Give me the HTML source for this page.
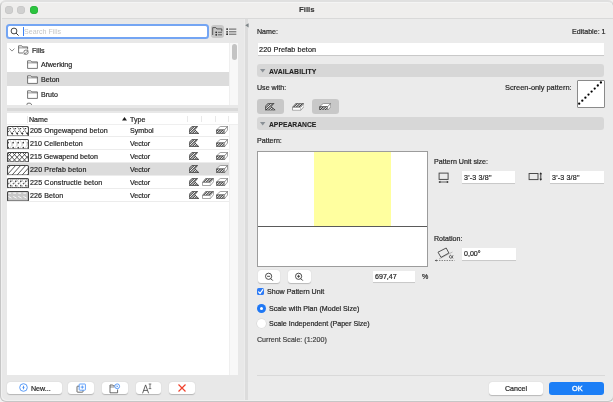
<!DOCTYPE html>
<html><head><meta charset="utf-8">
<style>
*{box-sizing:border-box;margin:0;padding:0}
html,body{width:613px;height:402px;overflow:hidden;background:#f3f3f3;font-family:"Liberation Sans",sans-serif;color:#222}
.a{position:absolute}
.t{position:absolute;white-space:nowrap;font-size:7.1px;line-height:1;color:#262626;will-change:transform;-webkit-text-stroke-width:0.2px;margin-top:0.8px}
.b{-webkit-text-stroke-width:0.1px}
.white{background:#fff}
.field{position:absolute;background:#fff;box-shadow:0 0.6px 0.6px rgba(0,0,0,0.14)}
.hdr{position:absolute;left:257px;width:347px;height:13px;background:#d7d7d7;border-radius:3px}
.btn{position:absolute;background:#fff;border-radius:3px;box-shadow:0 0.5px 1px rgba(0,0,0,0.22)}
.rowline{position:absolute;left:7px;width:222px;height:1px;background:#ececec}
</style></head><body>
<svg width="0" height="0" style="position:absolute">
 <defs>
  <pattern id="hd" width="1.8" height="1.8" patternUnits="userSpaceOnUse" patternTransform="rotate(45)"><rect width="1.8" height="1.8" fill="#fff"/><rect width="1.0" height="1.8" fill="#3a3a3a"/></pattern>
  <pattern id="hl" width="5" height="5" patternUnits="userSpaceOnUse" patternTransform="rotate(45)"><rect width="5" height="5" fill="#fff"/><rect width="1.3" height="5" fill="#333"/></pattern>
  <symbol id="ifp" viewBox="0 0 10 8"><path d="M3 0.4H8.6L5.8 3.8L9.8 7.6H0.3V3.3Z" fill="url(#hd)" stroke="#333" stroke-width="0.75" stroke-linejoin="round"/></symbol>
  <symbol id="isl" viewBox="0 0 12 8"><path d="M3.6 0.5H11.6L8.4 4.4H0.5Z" fill="url(#hd)" stroke="#333" stroke-width="0.5"/><path d="M0.5 4.4H8.4V7.5H0.5Z" fill="#fff" stroke="#666" stroke-width="0.6"/><path d="M8.4 4.4L11.6 0.5V3.6L8.4 7.5" fill="#fff" stroke="#666" stroke-width="0.6"/></symbol>
  <symbol id="i3d" viewBox="0 0 12 8"><path d="M4.2 0.5H11.5L8.6 3.9H0.5Z" fill="#fff" stroke="#666" stroke-width="0.6"/><path d="M0.5 3.9H8.6V7.6H0.5Z" fill="url(#hd)" stroke="#333" stroke-width="0.6"/><path d="M8.6 3.9L11.5 0.5V4L8.6 7.6" fill="#fff" stroke="#666" stroke-width="0.6"/></symbol>
 </defs>
</svg>

<!-- window frame bg -->
<div class="a" style="left:0;top:0;width:614px;height:402px;background:#e9e9e9;border-radius:6px;overflow:hidden">
  <div class="a" style="left:0;top:0;width:614px;height:19px;background:#efeeed;border-bottom:1px solid #d9d9d9"></div>
  <div class="a" style="left:0;top:19px;width:244px;height:382px;background:#e8e8e8"></div>
  <div class="a" style="left:244px;top:19px;width:1px;height:382px;background:#ececec"></div>
  <div class="a" style="left:245px;top:19px;width:3.2px;height:382px;background:#dcdcdc"></div>
  <div class="a" style="left:248.2px;top:19px;width:365px;height:382px;background:#ebebeb"></div>
</div>
<!-- traffic lights -->
<div class="a" style="left:5.1px;top:5.9px;width:7.9px;height:7.9px;border-radius:50%;background:#d0d0d0;box-shadow:inset 0 0 0 0.5px #c2c2c2"></div>
<div class="a" style="left:17.3px;top:5.9px;width:7.9px;height:7.9px;border-radius:50%;background:#d0d0d0;box-shadow:inset 0 0 0 0.5px #c2c2c2"></div>
<div class="a" style="left:29.8px;top:5.9px;width:7.9px;height:7.9px;border-radius:50%;background:#2bc43f;box-shadow:inset 0 0 0 0.5px #22a834"></div>
<div class="t b" style="left:299px;top:5.2px;font-weight:700;font-size:7.8px;color:#333">Fills</div>
<svg class="a" style="left:244.5px;top:22.5px" width="4" height="5" viewBox="0 0 4 5"><path d="M3.6 0.2V4.4L0.2 2.3Z" fill="#7d8588"/></svg>

<!-- search -->
<div class="a" style="left:6px;top:23.5px;width:202.5px;height:15.5px;border:2px solid #74a5f3;border-radius:3.5px;background:#fff"></div>
<svg class="a" style="left:10px;top:26.5px" width="10" height="10" viewBox="0 0 10 10"><circle cx="4" cy="4" r="2.9" fill="none" stroke="#333" stroke-width="0.9"/><line x1="6.1" y1="6.1" x2="8.6" y2="8.6" stroke="#333" stroke-width="1"/></svg>
<div class="a" style="left:23.3px;top:26.8px;width:1.1px;height:9px;background:#3b82f6"></div>
<div class="t" style="left:23.6px;top:27.8px;color:#c6c6c6;font-size:7.1px;-webkit-text-stroke-width:0">Search Fills</div>
<div class="a" style="left:211px;top:25px;width:12.7px;height:12.6px;background:#c7c7c7;border-radius:3px"></div>
<svg class="a" style="left:211px;top:25px" width="13" height="13" viewBox="0 0 13 13"><path d="M1.7 10V2.6H4.8L5.8 3.9H10.8V6.3" fill="none" stroke="#454545" stroke-width="0.85" stroke-linejoin="round"/><circle cx="5.2" cy="7.3" r="0.85" fill="#222"/><circle cx="5.2" cy="9.8" r="0.85" fill="#222"/><path d="M7 7.3H11M7 9.8H11" stroke="#555" stroke-width="0.9"/></svg>
<svg class="a" style="left:226px;top:28.3px" width="11" height="8" viewBox="0 0 11 8"><circle cx="1.1" cy="1.1" r="0.9" fill="#111"/><circle cx="1.1" cy="3.8" r="0.9" fill="#333"/><circle cx="1.1" cy="6.2" r="0.9" fill="#111"/><path d="M3 1.1H10.3M3 3.8H10.3M3 6.2H10.3" stroke="#555" stroke-width="0.95"/></svg>

<!-- tree -->
<div class="a white" style="left:7px;top:43px;width:231px;height:62px"></div>
<div class="a" style="left:7px;top:72px;width:222.4px;height:14px;background:#dcdcdc"></div>
<div class="a" style="left:229.4px;top:43px;width:8.7px;height:62px;background:#f8f8f8;border-left:0.5px solid #efefef"></div>
<div class="a" style="left:231.8px;top:44.4px;width:5.4px;height:15.6px;background:#c3c3c3;border-radius:3px"></div>
<svg class="a" style="left:9px;top:48px" width="6" height="4" viewBox="0 0 6 4"><path d="M0.6 0.6L3 3.1L5.4 0.6" fill="none" stroke="#707070" stroke-width="0.8"/></svg>

<svg class="a" style="left:18px;top:45px" width="11" height="10" viewBox="0 0 11 10"><path d="M0.6 8V0.8H3.8L4.6 1.9H9.6V4.5" fill="none" stroke="#4a4a4a" stroke-width="0.75"/><line x1="0.6" y1="2.9" x2="9.6" y2="2.9" stroke="#4a4a4a" stroke-width="0.6"/><line x1="0.6" y1="8" x2="5" y2="8" stroke="#4a4a4a" stroke-width="0.75"/><circle cx="8" cy="7.2" r="2.2" fill="none" stroke="#4a4a4a" stroke-width="0.7"/><path d="M6 9.6L10 5.6" stroke="#4a4a4a" stroke-width="0.7"/></svg>
<div class="t" style="left:32px;top:47.1px">Fills</div>
<svg class="a" style="left:26.8px;top:59.9px" width="11" height="9" viewBox="0 0 11 9"><path d="M0.6 8.4V0.8H3.8L4.6 1.9H10.4V8.4Z" fill="#fff" stroke="#4a4a4a" stroke-width="0.75" stroke-linejoin="round"/><line x1="0.6" y1="2.9" x2="10.4" y2="2.9" stroke="#4a4a4a" stroke-width="0.6"/></svg>
<div class="t" style="left:40.5px;top:61.7px">Afwerking</div>
<svg class="a" style="left:26.8px;top:74.7px" width="11" height="9" viewBox="0 0 11 9"><path d="M0.6 8.4V0.8H3.8L4.6 1.9H10.4V8.4Z" fill="#fff" stroke="#4a4a4a" stroke-width="0.75" stroke-linejoin="round"/><line x1="0.6" y1="2.9" x2="10.4" y2="2.9" stroke="#4a4a4a" stroke-width="0.6"/></svg>
<div class="t" style="left:40.5px;top:76.4px">Beton</div>
<svg class="a" style="left:26.8px;top:89.7px" width="11" height="9" viewBox="0 0 11 9"><path d="M0.6 8.4V0.8H3.8L4.6 1.9H10.4V8.4Z" fill="#fff" stroke="#4a4a4a" stroke-width="0.75" stroke-linejoin="round"/><line x1="0.6" y1="2.9" x2="10.4" y2="2.9" stroke="#4a4a4a" stroke-width="0.6"/></svg>
<div class="t" style="left:40.5px;top:91.3px">Bruto</div>
<svg class="a" style="left:26px;top:102px" width="8" height="3" viewBox="0 0 8 3"><path d="M1 3V2.2Q1 1.2 2 1.2H4Q4.8 1.2 5.2 2L5.6 3" fill="none" stroke="#555" stroke-width="0.8"/></svg>
<div class="a" style="left:7px;top:107.8px;width:231px;height:3.3px;background:#d9d9d9"></div>
<div class="a white" style="left:7px;top:113px;width:231px;height:261.6px"></div>
<div class="a" style="left:229.4px;top:124px;width:8.7px;height:250.6px;background:#f8f8f8;border-left:0.5px solid #efefef"></div>
<div class="a" style="left:7px;top:123.6px;width:231px;height:0.8px;background:#efefef"></div>
<div class="t" style="left:29px;top:115.9px">Name</div>
<svg class="a" style="left:122.2px;top:117.4px" width="5" height="4" viewBox="0 0 5 4"><path d="M0 3.6L2.5 0L5 3.6Z" fill="#1e1e1e"/></svg>
<div class="t" style="left:129.6px;top:115.9px">Type</div>
<div class="a" style="left:27.2px;top:115.5px;width:0.8px;height:7px;background:#e6e6e6"></div>
<div class="a" style="left:186.5px;top:116px;width:0.8px;height:6px;background:#e9e9e9"></div>
<div class="a" style="left:200.8px;top:116px;width:0.8px;height:6px;background:#e9e9e9"></div>
<div class="a" style="left:214.5px;top:116px;width:0.8px;height:6px;background:#e9e9e9"></div>
<div class="a" style="left:228.3px;top:116px;width:0.8px;height:6px;background:#e9e9e9"></div>

<div class="rowline" style="top:136.0px"></div>
<svg class="a" style="left:6.5px;top:125.5px" width="22" height="10.5" viewBox="0 0 22 10.5"><clipPath id="c0"><rect x="0.5" y="0.5" width="21" height="9.5" rx="1"/></clipPath><g clip-path="url(#c0)"><rect width="22" height="11" fill="#fff"/><g stroke="#666" stroke-width="0.7"><line x1="0.5" y1="1.2" x2="6.0" y2="9.5"/><line x1="5.55" y1="1.2" x2="11.05" y2="9.5"/><line x1="10.6" y1="1.2" x2="16.1" y2="9.5"/><line x1="15.649999999999999" y1="1.2" x2="21.15" y2="9.5"/><line x1="20.7" y1="1.2" x2="26.2" y2="9.5"/></g><g fill="#2a2a2a"><ellipse cx="3.3" cy="2.6" rx="0.9" ry="0.7"/><ellipse cx="5.2" cy="7.4" rx="1" ry="0.8"/><circle cx="1.5" cy="5.4" r="0.5"/><ellipse cx="8.35" cy="2.6" rx="0.9" ry="0.7"/><ellipse cx="10.25" cy="7.4" rx="1" ry="0.8"/><circle cx="6.55" cy="5.4" r="0.5"/><ellipse cx="13.399999999999999" cy="2.6" rx="0.9" ry="0.7"/><ellipse cx="15.3" cy="7.4" rx="1" ry="0.8"/><circle cx="11.6" cy="5.4" r="0.5"/><ellipse cx="18.45" cy="2.6" rx="0.9" ry="0.7"/><ellipse cx="20.349999999999998" cy="7.4" rx="1" ry="0.8"/><circle cx="16.65" cy="5.4" r="0.5"/></g></g><rect x="0.55" y="0.55" width="20.9" height="9.4" rx="1" fill="none" stroke="#454545" stroke-width="1.1"/></svg>
<div class="t" style="left:29.6px;top:126.8px;letter-spacing:0.1px">205 Ongewapend beton</div>
<div class="t" style="left:130px;top:126.8px">Symbol</div>
<svg class="a" style="left:189px;top:126.3px" width="10" height="8"><use href="#ifp"/></svg>
<svg class="a" style="left:216.3px;top:126.3px" width="12" height="8"><use href="#i3d"/></svg>
<div class="rowline" style="top:149.0px"></div>
<svg class="a" style="left:6.5px;top:138.5px" width="22" height="10.5" viewBox="0 0 22 10.5"><clipPath id="c1"><rect x="0.5" y="0.5" width="21" height="9.5" rx="1"/></clipPath><g clip-path="url(#c1)"><rect width="22" height="11" fill="#fff"/><g stroke="#bbb" stroke-width="0.5"><line x1="-2.5" y1="0" x2="2.5" y2="10.5"/><line x1="2.5" y1="0" x2="-2.5" y2="10.5"/><line x1="2.55" y1="0" x2="7.55" y2="10.5"/><line x1="7.55" y1="0" x2="2.55" y2="10.5"/><line x1="7.6" y1="0" x2="12.6" y2="10.5"/><line x1="12.6" y1="0" x2="7.6" y2="10.5"/><line x1="12.649999999999999" y1="0" x2="17.65" y2="10.5"/><line x1="17.65" y1="0" x2="12.649999999999999" y2="10.5"/><line x1="17.7" y1="0" x2="22.7" y2="10.5"/><line x1="22.7" y1="0" x2="17.7" y2="10.5"/><line x1="22.75" y1="0" x2="27.75" y2="10.5"/><line x1="27.75" y1="0" x2="22.75" y2="10.5"/></g><g fill="#111"><circle cx="1.1" cy="3.8" r="0.75"/><circle cx="1.1" cy="8.7" r="0.75"/><circle cx="6.15" cy="3.8" r="0.75"/><circle cx="6.15" cy="8.7" r="0.75"/><circle cx="11.2" cy="3.8" r="0.75"/><circle cx="11.2" cy="8.7" r="0.75"/><circle cx="16.25" cy="3.8" r="0.75"/><circle cx="16.25" cy="8.7" r="0.75"/><circle cx="21.3" cy="3.8" r="0.75"/><circle cx="21.3" cy="8.7" r="0.75"/></g></g><rect x="0.55" y="0.55" width="20.9" height="9.4" rx="1" fill="none" stroke="#454545" stroke-width="1.1"/></svg>
<div class="t" style="left:29.6px;top:139.8px;letter-spacing:0.07px">210 Cellenbeton</div>
<div class="t" style="left:130px;top:139.8px">Vector</div>
<svg class="a" style="left:189px;top:139.3px" width="10" height="8"><use href="#ifp"/></svg>
<svg class="a" style="left:216.3px;top:139.3px" width="12" height="8"><use href="#i3d"/></svg>
<div class="rowline" style="top:162.0px"></div>
<svg class="a" style="left:6.5px;top:151.5px" width="22" height="10.5" viewBox="0 0 22 10.5"><clipPath id="c2"><rect x="0.5" y="0.5" width="21" height="9.5" rx="1"/></clipPath><g clip-path="url(#c2)"><rect width="22" height="11" fill="#fff"/><g stroke="#3a3a3a" stroke-width="0.85"><line x1="-10" y1="0" x2="0" y2="10.5"/><line x1="0" y1="0" x2="-10" y2="10.5"/><line x1="-5" y1="0" x2="5" y2="10.5"/><line x1="5" y1="0" x2="-5" y2="10.5"/><line x1="0" y1="0" x2="10" y2="10.5"/><line x1="10" y1="0" x2="0" y2="10.5"/><line x1="5" y1="0" x2="15" y2="10.5"/><line x1="15" y1="0" x2="5" y2="10.5"/><line x1="10" y1="0" x2="20" y2="10.5"/><line x1="20" y1="0" x2="10" y2="10.5"/><line x1="15" y1="0" x2="25" y2="10.5"/><line x1="25" y1="0" x2="15" y2="10.5"/><line x1="20" y1="0" x2="30" y2="10.5"/><line x1="30" y1="0" x2="20" y2="10.5"/></g></g><rect x="0.55" y="0.55" width="20.9" height="9.4" rx="1" fill="none" stroke="#454545" stroke-width="1.1"/></svg>
<div class="t" style="left:29.6px;top:152.8px;letter-spacing:0.0px">215 Gewapend beton</div>
<div class="t" style="left:130px;top:152.8px">Vector</div>
<svg class="a" style="left:189px;top:152.3px" width="10" height="8"><use href="#ifp"/></svg>
<svg class="a" style="left:216.3px;top:152.3px" width="12" height="8"><use href="#i3d"/></svg>
<div class="a" style="left:7px;top:162.5px;width:222.4px;height:13px;background:#dcdcdc"></div>
<div class="rowline" style="top:175.0px"></div>
<svg class="a" style="left:6.5px;top:164.5px" width="22" height="10.5" viewBox="0 0 22 10.5"><clipPath id="c3"><rect x="0.5" y="0.5" width="21" height="9.5" rx="1"/></clipPath><g clip-path="url(#c3)"><rect width="22" height="11" fill="#fff"/><g stroke="#3a3a3a" stroke-width="0.85"><line x1="-5.0" y1="10" x2="3.5" y2="0.5"/><line x1="0.04999999999999982" y1="10" x2="8.55" y2="0.5"/><line x1="5.1" y1="10" x2="13.6" y2="0.5"/><line x1="10.149999999999999" y1="10" x2="18.65" y2="0.5"/><line x1="15.2" y1="10" x2="23.7" y2="0.5"/><line x1="20.25" y1="10" x2="28.75" y2="0.5"/></g></g><rect x="0.55" y="0.55" width="20.9" height="9.4" rx="1" fill="none" stroke="#454545" stroke-width="1.1"/></svg>
<div class="t" style="left:29.6px;top:165.8px;letter-spacing:0.13px">220 Prefab beton</div>
<div class="t" style="left:130px;top:165.8px">Vector</div>
<svg class="a" style="left:189px;top:165.3px" width="10" height="8"><use href="#ifp"/></svg>
<svg class="a" style="left:216.3px;top:165.3px" width="12" height="8"><use href="#i3d"/></svg>
<div class="rowline" style="top:188.0px"></div>
<svg class="a" style="left:6.5px;top:177.5px" width="22" height="10.5" viewBox="0 0 22 10.5"><clipPath id="c4"><rect x="0.5" y="0.5" width="21" height="9.5" rx="1"/></clipPath><g clip-path="url(#c4)"><rect width="22" height="11" fill="#fff"/><g stroke="#aaa" stroke-width="0.6"><line x1="-7.5" y1="0" x2="2.5" y2="10.5"/><line x1="2.5" y1="0" x2="-7.5" y2="10.5"/><line x1="-2.45" y1="0" x2="7.55" y2="10.5"/><line x1="7.55" y1="0" x2="-2.45" y2="10.5"/><line x1="2.5999999999999996" y1="0" x2="12.6" y2="10.5"/><line x1="12.6" y1="0" x2="2.5999999999999996" y2="10.5"/><line x1="7.649999999999999" y1="0" x2="17.65" y2="10.5"/><line x1="17.65" y1="0" x2="7.649999999999999" y2="10.5"/><line x1="12.7" y1="0" x2="22.7" y2="10.5"/><line x1="22.7" y1="0" x2="12.7" y2="10.5"/><line x1="17.75" y1="0" x2="27.75" y2="10.5"/><line x1="27.75" y1="0" x2="17.75" y2="10.5"/><line x1="22.799999999999997" y1="0" x2="32.8" y2="10.5"/><line x1="32.8" y1="0" x2="22.799999999999997" y2="10.5"/></g><g fill="#333"><circle cx="3.6" cy="3.2" r="0.75"/><circle cx="3.6" cy="7.7" r="0.75"/><circle cx="1.2" cy="5.5" r="0.6"/><circle cx="8.65" cy="3.2" r="0.75"/><circle cx="8.65" cy="7.7" r="0.75"/><circle cx="6.25" cy="5.5" r="0.6"/><circle cx="13.7" cy="3.2" r="0.75"/><circle cx="13.7" cy="7.7" r="0.75"/><circle cx="11.299999999999999" cy="5.5" r="0.6"/><circle cx="18.75" cy="3.2" r="0.75"/><circle cx="18.75" cy="7.7" r="0.75"/><circle cx="16.349999999999998" cy="5.5" r="0.6"/><circle cx="23.8" cy="3.2" r="0.75"/><circle cx="23.8" cy="7.7" r="0.75"/><circle cx="21.4" cy="5.5" r="0.6"/></g><g fill="#222"><rect x="0.6" y="0.4" width="1.1" height="1"/><rect x="0.6" y="9.1" width="1.1" height="1"/><rect x="2.6" y="0.4" width="1.1" height="1"/><rect x="2.6" y="9.1" width="1.1" height="1"/><rect x="4.6" y="0.4" width="1.1" height="1"/><rect x="4.6" y="9.1" width="1.1" height="1"/><rect x="6.6" y="0.4" width="1.1" height="1"/><rect x="6.6" y="9.1" width="1.1" height="1"/><rect x="8.6" y="0.4" width="1.1" height="1"/><rect x="8.6" y="9.1" width="1.1" height="1"/><rect x="10.6" y="0.4" width="1.1" height="1"/><rect x="10.6" y="9.1" width="1.1" height="1"/><rect x="12.6" y="0.4" width="1.1" height="1"/><rect x="12.6" y="9.1" width="1.1" height="1"/><rect x="14.6" y="0.4" width="1.1" height="1"/><rect x="14.6" y="9.1" width="1.1" height="1"/><rect x="16.6" y="0.4" width="1.1" height="1"/><rect x="16.6" y="9.1" width="1.1" height="1"/><rect x="18.6" y="0.4" width="1.1" height="1"/><rect x="18.6" y="9.1" width="1.1" height="1"/><rect x="20.6" y="0.4" width="1.1" height="1"/><rect x="20.6" y="9.1" width="1.1" height="1"/></g></g><rect x="0.55" y="0.55" width="20.9" height="9.4" rx="1" fill="none" stroke="#454545" stroke-width="1.1"/></svg>
<div class="t" style="left:29.6px;top:178.8px;letter-spacing:0.14px">225 Constructie beton</div>
<div class="t" style="left:130px;top:178.8px">Vector</div>
<svg class="a" style="left:189px;top:178.3px" width="10" height="8"><use href="#ifp"/></svg>
<svg class="a" style="left:202.3px;top:178.3px" width="12" height="8"><use href="#isl"/></svg>
<svg class="a" style="left:216.3px;top:178.3px" width="12" height="8"><use href="#i3d"/></svg>
<div class="rowline" style="top:201.0px"></div>
<svg class="a" style="left:6.5px;top:190.5px" width="22" height="10.5" viewBox="0 0 22 10.5"><clipPath id="c5"><rect x="0.5" y="0.5" width="21" height="9.5" rx="1"/></clipPath><g clip-path="url(#c5)"><rect width="22" height="11" fill="#c9c9c9"/><g stroke="#fff" stroke-width="0.9" stroke-linecap="round"><line x1="1.6" y1="2.2" x2="3.6" y2="2.2"/><line x1="1.6" y1="5.6" x2="4.2" y2="7"/><line x1="6.65" y1="2.2" x2="8.65" y2="2.2"/><line x1="6.65" y1="5.6" x2="9.25" y2="7"/><line x1="11.7" y1="2.2" x2="13.7" y2="2.2"/><line x1="11.7" y1="5.6" x2="14.3" y2="7"/><line x1="16.75" y1="2.2" x2="18.75" y2="2.2"/><line x1="16.75" y1="5.6" x2="19.349999999999998" y2="7"/></g></g><rect x="0.55" y="0.55" width="20.9" height="9.4" rx="1" fill="none" stroke="#454545" stroke-width="1.1"/></svg>
<div class="t" style="left:29.6px;top:191.8px;letter-spacing:0.1px">226 Beton</div>
<div class="t" style="left:130px;top:191.8px">Vector</div>
<svg class="a" style="left:189px;top:191.3px" width="10" height="8"><use href="#ifp"/></svg>
<svg class="a" style="left:202.3px;top:191.3px" width="12" height="8"><use href="#isl"/></svg>
<svg class="a" style="left:216.3px;top:191.3px" width="12" height="8"><use href="#i3d"/></svg>

<div class="t" style="left:257px;top:28px">Name:</div>
<div class="t" style="left:571.5px;top:28px">Editable: 1</div>
<div class="field" style="left:257.6px;top:43.4px;width:346.3px;height:11.8px"></div>
<div class="t" style="left:259.4px;top:45.4px;font-size:7.25px;letter-spacing:0.1px">220 Prefab beton</div>

<div class="hdr" style="top:64px"></div>
<svg class="a" style="left:260.4px;top:68.6px" width="6" height="4" viewBox="0 0 6 4"><path d="M0 0H5.4L2.7 3.5Z" fill="#8a9096"/></svg>
<div class="t b" style="left:269.3px;top:68px;font-weight:700;font-size:6.9px;color:#222;letter-spacing:0.08px">AVAILABILITY</div>
<div class="t" style="left:257px;top:84px">Use with:</div>
<div class="t" style="left:504.5px;top:83.3px;font-size:7.4px">Screen-only pattern:</div>
<div class="a white" style="left:577.2px;top:80.4px;width:27.5px;height:27.2px;border:0.9px solid #8a8a8a;border-radius:1px"></div>
<svg class="a" style="left:577.2px;top:80.4px" width="28" height="27" viewBox="0 0 28 27"><circle cx="2.2" cy="23.7" r="1.15" fill="#000"/><circle cx="5.300000000000001" cy="20.669999999999998" r="1.15" fill="#000"/><circle cx="8.4" cy="17.64" r="1.15" fill="#000"/><circle cx="11.5" cy="14.61" r="1.15" fill="#000"/><circle cx="14.600000000000001" cy="11.58" r="1.15" fill="#000"/><circle cx="17.7" cy="8.55" r="1.15" fill="#000"/><circle cx="20.8" cy="5.52" r="1.15" fill="#000"/><circle cx="23.9" cy="2.490000000000002" r="1.15" fill="#000"/></svg>

<div class="a" style="left:257px;top:99px;width:27px;height:14.5px;background:#c8c8c8;border-radius:3px"></div>
<div class="a" style="left:312px;top:99px;width:27px;height:14.5px;background:#c8c8c8;border-radius:3px"></div>
<svg class="a" style="left:265px;top:103px" width="10.5" height="7.6" viewBox="0 0 10 8" preserveAspectRatio="none"><use href="#ifp"/></svg>
<svg class="a" style="left:292px;top:102.8px" width="12.4" height="7.8" viewBox="0 0 12 8" preserveAspectRatio="none"><use href="#isl"/></svg>
<svg class="a" style="left:319px;top:102.5px" width="12.2" height="7.6" viewBox="0 0 12 8" preserveAspectRatio="none"><use href="#i3d"/></svg>

<div class="hdr" style="top:117.2px"></div>
<svg class="a" style="left:260.4px;top:121.8px" width="6" height="4" viewBox="0 0 6 4"><path d="M0 0H5.4L2.7 3.5Z" fill="#8a9096"/></svg>
<div class="t b" style="left:269.3px;top:121.2px;font-weight:700;font-size:6.75px;color:#222">APPEARANCE</div>
<div class="t" style="left:257px;top:137.3px">Pattern:</div>

<div class="a white" style="left:257px;top:150.5px;width:170.8px;height:116px;border:1px solid #9c9c9c"></div>
<div class="a" style="left:313.6px;top:151.5px;width:77.4px;height:74.7px;background:#ffff9f"></div>
<div class="a" style="left:258px;top:225.8px;width:169px;height:1px;background:#5a5a5a"></div>

<div class="t" style="left:434px;top:158.5px">Pattern Unit size:</div>
<svg class="a" style="left:438.2px;top:172.3px" width="11" height="11" viewBox="0 0 11 11"><rect x="1.1" y="1.1" width="9" height="6.3" fill="none" stroke="#444" stroke-width="0.95"/><line x1="1.5" y1="10" x2="9.7" y2="10" stroke="#333" stroke-width="0.75"/><path d="M0.4 10L2.4 8.7V11.3Z M10.8 10L8.8 8.7V11.3Z" fill="#333"/></svg>
<div class="field" style="left:461.8px;top:170.9px;width:53.5px;height:12.4px"></div>
<div class="t" style="left:463.6px;top:173.8px;letter-spacing:0.18px">3'-3 3/8"</div>
<svg class="a" style="left:527.5px;top:172px" width="14" height="9" viewBox="0 0 14 9"><rect x="1.1" y="1.5" width="8.9" height="6.1" fill="none" stroke="#444" stroke-width="0.95"/><line x1="12.8" y1="2" x2="12.8" y2="7" stroke="#222" stroke-width="0.9"/><path d="M12.8 0.3L11.3 2.3H14.3Z M12.8 8.7L11.3 6.7H14.3Z" fill="#222"/></svg>
<div class="field" style="left:550.1px;top:170.9px;width:53.9px;height:12.4px"></div>
<div class="t" style="left:552px;top:173.8px;letter-spacing:0.18px">3'-3 3/8"</div>

<div class="t" style="left:433.7px;top:234.8px">Rotation:</div>
<svg class="a" style="left:434px;top:245px" width="21" height="17" viewBox="0 0 21 17"><line x1="5" y1="14" x2="18.5" y2="7" stroke="#888" stroke-width="0.5"/><path d="M4 7.2L12.2 3L14.9 8L7 12.4Z" fill="none" stroke="#444" stroke-width="0.9" stroke-linejoin="round"/><line x1="2.6" y1="15.5" x2="20.5" y2="15.5" stroke="#555" stroke-width="0.75" stroke-dasharray="1.3 1.2"/><path d="M0.8 15.5L2.6 14.6V16.4Z" fill="#333"/><path d="M19 10.3C17.9 13.4 16.9 13.3 16.2 13.1C15.1 12.8 15.2 10.5 16.4 10.3C17.5 10.1 17.9 12.9 19.2 13.3" fill="none" stroke="#333" stroke-width="0.75"/></svg>
<div class="field" style="left:462px;top:247.9px;width:53.5px;height:12.2px"></div>
<div class="t" style="left:463.8px;top:250.5px">0,00°</div>

<div class="btn" style="left:257.7px;top:270px;width:22.6px;height:12.7px"></div>
<div class="btn" style="left:287.8px;top:270px;width:22.9px;height:12.7px"></div>
<svg class="a" style="left:264px;top:272px" width="10" height="10" viewBox="0 0 10 10"><circle cx="4.6" cy="4.3" r="3.1" fill="none" stroke="#3a3a3a" stroke-width="0.9"/><line x1="6.8" y1="6.6" x2="8.8" y2="8.6" stroke="#3a3a3a" stroke-width="1"/><line x1="3.1" y1="4.3" x2="6.1" y2="4.3" stroke="#3a3a3a" stroke-width="0.9"/></svg>
<svg class="a" style="left:294.2px;top:272px" width="10" height="10" viewBox="0 0 10 10"><circle cx="4.6" cy="4.3" r="3.1" fill="none" stroke="#3a3a3a" stroke-width="0.9"/><line x1="6.8" y1="6.6" x2="8.8" y2="8.6" stroke="#3a3a3a" stroke-width="1"/><line x1="3.1" y1="4.3" x2="6.1" y2="4.3" stroke="#3a3a3a" stroke-width="0.9"/><line x1="4.6" y1="2.8" x2="4.6" y2="5.8" stroke="#3a3a3a" stroke-width="0.9"/></svg>
<div class="field" style="left:373px;top:270.6px;width:41.7px;height:11.7px"></div>
<div class="t" style="left:375px;top:273.2px">697,47</div>
<div class="t" style="left:421.5px;top:273.2px">%</div>

<div class="a" style="left:256.8px;top:287.9px;width:7.3px;height:7.4px;background:#2d7bf5;border-radius:1.6px"></div>
<svg class="a" style="left:256.8px;top:287.9px" width="8" height="8" viewBox="0 0 8 8"><path d="M1.6 3.9L3.1 5.5L5.8 1.7" fill="none" stroke="#fff" stroke-width="1.25" stroke-linecap="round" stroke-linejoin="round"/></svg>
<div class="t" style="left:266.7px;top:288.3px">Show Pattern Unit</div>
<div class="a" style="left:256.8px;top:303.7px;width:9px;height:9px;background:#1f78f5;border-radius:50%"></div>
<div class="a" style="left:259.7px;top:306.6px;width:3.2px;height:3.2px;background:#fff;border-radius:50%"></div>
<div class="t" style="left:269.2px;top:305.2px">Scale with Plan (Model Size)</div>
<div class="a" style="left:256.8px;top:319px;width:9px;height:9px;background:#fff;border-radius:50%;box-shadow:0 0 0 0.6px #d6d6d6"></div>
<div class="t" style="left:269.2px;top:320.6px">Scale Independent (Paper Size)</div>
<div class="t" style="left:257px;top:336px;color:#444">Current Scale: (1:200)</div>

<div class="a" style="left:257px;top:375px;width:347.7px;height:0.9px;background:#d9d9d9"></div>
<div class="btn" style="left:488.7px;top:382.3px;width:54.6px;height:12.5px"></div>
<div class="t" style="left:505px;top:385.3px">Cancel</div>
<div class="a" style="left:549.4px;top:382.2px;width:55px;height:12.6px;background:#1b7ef6;border-radius:3px"></div>
<div class="t" style="left:572.3px;top:384.6px;color:#fff;font-size:7.3px;-webkit-text-stroke-width:0.35px">OK</div>

<div class="btn" style="left:6.5px;top:381.8px;width:55.2px;height:12.6px"></div>
<svg class="a" style="left:19px;top:382.5px" width="9" height="9" viewBox="0 0 9 9"><circle cx="4.5" cy="4.5" r="3.8" fill="none" stroke="#5b9cf6" stroke-width="1"/><path d="M4.5 2.3L5.4 4.5L4.5 6.7L3.6 4.5Z" fill="#4a90f5"/></svg>
<div class="t" style="left:30.5px;top:385.3px">New...</div>
<div class="btn" style="left:68.2px;top:381.8px;width:26.1px;height:12.6px"></div>
<div class="btn" style="left:101.8px;top:381.8px;width:26.1px;height:12.6px"></div>
<div class="btn" style="left:135.6px;top:381.8px;width:25.7px;height:12.6px"></div>
<div class="btn" style="left:169px;top:381.8px;width:25.7px;height:12.6px"></div>
<svg class="a" style="left:76px;top:383px" width="11" height="11" viewBox="0 0 11 11"><rect x="1" y="3.2" width="6" height="6" rx="0.6" fill="#fff" stroke="#444" stroke-width="0.8"/><rect x="3.2" y="1" width="6.2" height="6.2" rx="0.6" fill="#fff" stroke="#3d8af7" stroke-width="0.8"/><path d="M6.3 2.5V5.7M4.7 4.1H7.9" stroke="#3d8af7" stroke-width="0.8"/></svg>
<svg class="a" style="left:109px;top:383px" width="12" height="11" viewBox="0 0 12 11"><path d="M1 9.8V2H3.8L4.6 3H6" fill="none" stroke="#444" stroke-width="0.8"/><path d="M1 9.8H8.6V6.5" fill="none" stroke="#444" stroke-width="0.8"/><line x1="1" y1="4" x2="5.5" y2="4" stroke="#444" stroke-width="0.6"/><circle cx="8.2" cy="3.3" r="2.4" fill="#fff" stroke="#3d8af7" stroke-width="0.8"/><path d="M7.6 2.2L9.1 3.3L7.6 4.4Z" fill="#3d8af7"/></svg>
<svg class="a" style="left:141px;top:383px" width="14" height="11" viewBox="0 0 14 11"><path d="M1.6 10.3L4.6 1.9L7.6 10.3M2.7 7.4H6.5" fill="none" stroke="#454545" stroke-width="0.85"/><path d="M7.7 1H10.3M9 1V5.6M7.7 5.6H10.3" fill="none" stroke="#454545" stroke-width="0.7"/></svg>
<svg class="a" style="left:177px;top:383px" width="10" height="10" viewBox="0 0 10 10"><path d="M1.5 1.5L8.5 8.5M8.5 1.5L1.5 8.5" stroke="#f0412c" stroke-width="1.2"/></svg>

<!-- window border overlay -->
<div class="a" style="left:0;top:0;width:614px;height:402px;border:1px solid #c6c6c6;border-top:2px solid #e0e0e0;border-radius:6px;box-shadow:inset 1px -1px 0 #f0f0f0, inset 0 1px 0 #f4f4f4;pointer-events:none"></div>
</body></html>
